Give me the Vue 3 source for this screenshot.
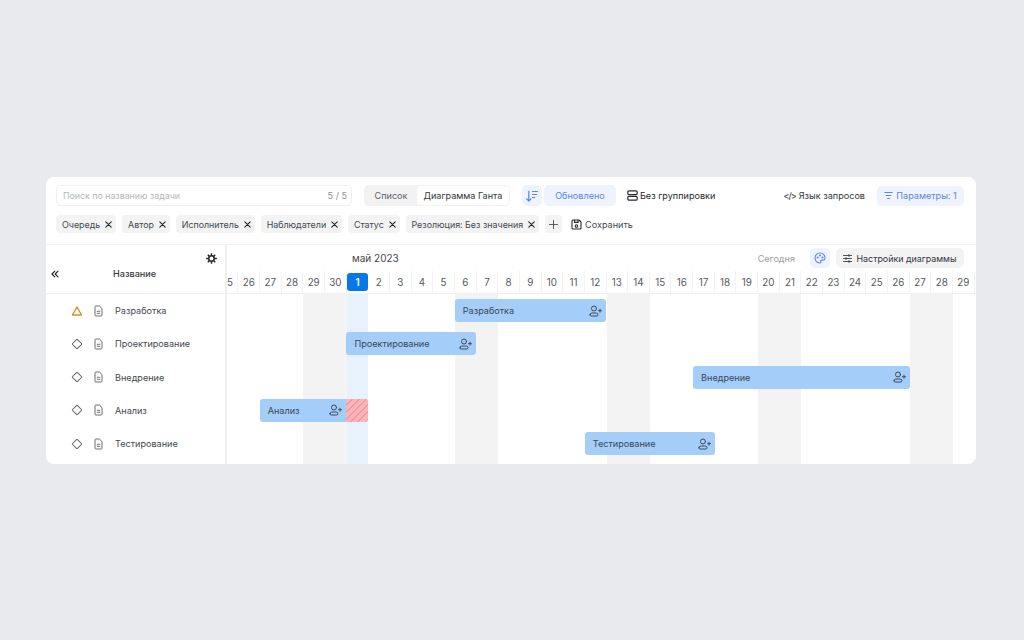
<template>
  <div class="page">
    <div class="card">
      <div class="toolbar">
        <div class="search">
          <span class="search-text">Поиск по названию задачи</span>
          <span class="search-count">5 / 5</span>
        </div>
        <div class="segment">
          <span class="seg-item">Список</span>
          <span class="seg-item active">Диаграмма Ганта</span>
        </div>
        <button class="sort-btn">
          <svg width="12" height="12" viewBox="0 0 12 12" fill="none" stroke="#5b87e8" stroke-width="1.2" stroke-linecap="round" stroke-linejoin="round">
            <path d="M2.800 1v10M.8 9 2.800 11 4.800 9M6.500 1.500h5M6.500 4.500h4M6.500 7.500h2.200" />
          </svg>
        </button>
        <button class="updated-btn">Обновлено</button>
        <div class="grouping">
          <svg width="11" height="11" viewBox="0 0 11 11" fill="none" stroke="#25282e" stroke-width="1.2">
            <rect x=".8" y=".8" width="9.400" height="3.900" rx="1.300" />
            <rect x=".8" y="6.300" width="9.400" height="3.900" rx="1.300" />
          </svg>
          <span>Без группировки</span>
        </div>
        <div class="spacer"></div>
        <div class="query">
          <span class="code-mark">&lt;/&gt;</span>
          <span>Язык запросов</span>
        </div>
        <button class="params-btn">
          <svg width="9" height="9" viewBox="0 0 9 9" fill="none" stroke="#5b87e8" stroke-width="1.100" stroke-linecap="round">
            <path d="M.8 1.500h7.400M2.300 4.500h4.400M3.600 7.500h1.800" />
          </svg>
          <span>Параметры: 1</span>
        </button>
      </div>

      <div class="filters">
        <span v-for="tag in tags" :key="tag" class="tag">
          {{ tag }}
          <svg width="7" height="7" viewBox="0 0 7 7" fill="none" stroke="#25282e" stroke-width="1.100" stroke-linecap="round">
            <path d="M.8.8l5.400 5.400M6.200.8.8 6.200" />
          </svg>
        </span>
        <button class="add-btn">
          <svg width="9" height="9" viewBox="0 0 9 9" fill="none" stroke="#55585e" stroke-width="1" stroke-linecap="round">
            <path d="M4.500.5v8M.5 4.500h8" />
          </svg>
        </button>
        <div class="save">
          <svg width="11" height="11" viewBox="0 0 11 11" fill="none" stroke="#25282e" stroke-width="1.100" stroke-linejoin="round">
            <path d="M1 2a1 1 0 0 1 1-1h6l2 2v6a1 1 0 0 1-1 1H2a1 1 0 0 1-1-1z" />
            <path d="M3.500 1v2.400h3.600V1" />
            <circle cx="5.500" cy="7" r="1.300" />
          </svg>
          <span>Сохранить</span>
        </div>
      </div>

      <div class="gantt">
        <div class="side">
          <div class="side-head">
            <svg class="gear" width="11" height="11" viewBox="0 0 11 11" fill="none" stroke="#1f2227">
              <circle cx="5.500" cy="5.500" r="2.700" stroke-width="1.500" />
              <path stroke-width="1.400" d="M5.500.2v2M5.500 8.800v2M.2 5.500h2M8.800 5.500h2M1.800 1.800l1.400 1.400M7.800 7.800l1.400 1.400M9.200 1.800 7.800 3.200M3.200 7.800 1.800 9.200" />
            </svg>
            <div class="side-title">
              <svg width="8" height="8" viewBox="0 0 8 8" fill="none" stroke="#1f2227" stroke-width="1.100" stroke-linecap="round" stroke-linejoin="round">
                <path d="M3.800 1.200 1 4l2.800 2.800M7 1.200 4.200 4 7 6.800" />
              </svg>
              <span>Название</span>
            </div>
          </div>
          <div class="side-rows">
            <div v-for="(task, i) in tasks" :key="task.name" class="side-row">
              <svg v-if="i === 0" class="prio" width="12" height="12" viewBox="0 0 12 12" fill="none" stroke="#d98f24" stroke-width="1.400" stroke-linejoin="round">
                <path d="M6 2 10.500 10H1.500z" />
              </svg>
              <svg v-else class="prio" width="12" height="12" viewBox="0 0 12 12" fill="none" stroke="#5d6067" stroke-width="1">
                <rect x="2.500" y="2.500" width="7" height="7" rx=".7" transform="rotate(45 6 6)" />
              </svg>
              <svg class="doc" width="9" height="12" viewBox="0 0 9 12" fill="none" stroke="#6b6e74" stroke-width="1" stroke-linejoin="round">
                <path d="M1 2a1 1 0 0 1 1-1h3.400L8 3.600V10a1 1 0 0 1-1 1H2a1 1 0 0 1-1-1z" />
                <path d="M2.800 6.300h3.400M2.800 8.300h3.400" />
              </svg>
              <span class="task-name">{{ task.name }}</span>
            </div>
          </div>
        </div>

        <div class="timeline">
          <div class="timeline-head">
            <div class="month-row">
              <span class="month">май 2023</span>
              <div class="spacer"></div>
              <span class="today-link">Сегодня</span>
              <button class="palette-btn">
                <svg width="12" height="12" viewBox="0 0 12 12" fill="none" stroke="#5b87e8" stroke-width="1.100" stroke-linejoin="round">
                  <path d="M6 1a5 5 0 1 0 0 10c1 0 1.200-.7.9-1.300-.4-.8 0-1.600 1-1.600h1.300C10.300 8.100 11 7.300 11 6c0-2.800-2.200-5-5-5z" />
                  <circle cx="3.600" cy="5.500" r=".5" />
                  <circle cx="6" cy="3.500" r=".5" />
                  <circle cx="8.500" cy="5.500" r=".5" />
                </svg>
              </button>
              <button class="settings-btn">
                <svg width="9" height="9" viewBox="0 0 9 9" fill="none" stroke="#3a3d43" stroke-width=".9" stroke-linecap="round">
                  <path d="M.5 1.500h8M.5 4.500h8M.5 7.500h8" />
                  <path d="M6 .5v2M3 3.500v2M6 6.500v2" />
                </svg>
                <span>Настройки диаграммы</span>
              </button>
            </div>
            <div class="days">
              <span v-for="d in days" :key="d.key" class="day" :class="{ current: d.today }">{{ d.label }}</span>
            </div>
          </div>

          <div class="chart">
            <div class="chart-cols">
              <span v-for="d in days" :key="d.key" class="col" :class="{ weekend: d.weekend, today: d.today }"></span>
            </div>
            <div
              v-for="(task, i) in tasks"
              :key="task.name"
              class="bar"
              :class="{ late: task.overdue }"
              :style="barStyle(task, i)"
            >
              <span class="bar-name">{{ task.name }}</span>
              <svg class="assign" width="13" height="12" viewBox="0 0 13 12" fill="none" stroke="#3b4a5e" stroke-width="1" stroke-linecap="round">
                <circle cx="5" cy="3.500" r="2.500" />
                <path d="M1 9.800a1.800 1.800 0 0 1 1.800-1.800h4.400A1.800 1.800 0 0 1 9 9.800c0 .7-.5 1.200-1.100 1.200H2.100C1.500 11 1 10.500 1 9.800z" />
                <path d="M11 4.200v3M9.500 5.700h3" />
              </svg>
              <span v-if="task.overdue" class="overdue"></span>
            </div>
          </div>
        </div>
      </div>
    </div>
  </div>
</template>

<script setup>
const dayW = 21.67

const tags = ['Очередь', 'Автор', 'Исполнитель', 'Наблюдатели', 'Статус', 'Резолюция: Без значения']

// start/end are offsets in days from the left edge of the chart
const tasks = [
  { name: 'Разработка', start: 10.5, end: 17.5 },
  { name: 'Проектирование', start: 5.5, end: 11.5 },
  { name: 'Внедрение', start: 21.5, end: 31.5 },
  { name: 'Анализ', start: 1.5, end: 6.5, overdue: true },
  { name: 'Тестирование', start: 16.5, end: 22.5 }
]

const days = []
for (let d = 25; d <= 30; d++) {
  days.push({ key: 'a' + d, label: d, weekend: d >= 29 })
}
for (let d = 1; d <= 29; d++) {
  // 6-7 May 2023 is the first weekend
  const mod = d % 7
  days.push({ key: 'm' + d, label: d, today: d === 1, weekend: mod === 6 || mod === 0 })
}

const barStyle = (task, i) => ({
  left: (task.start * dayW + 0.2) + 'px',
  width: (task.end - task.start) * dayW + 'px',
  top: 5 + i * 33.25 + 'px'
})
</script>

<style>
html, body {
  background: #e8eaee;
}
</style>

<style scoped>
.page {
  width: 1024px;
  height: 640px;
  padding-top: 177px;
  padding-left: 46px;
  box-sizing: border-box;
  font-family: Inter, "Noto Sans", sans-serif;
  font-size: 9.1px;
  color: #34373c;
  background: #e8eaee;
}

.card {
  width: 930px;
  height: 287px;
  background: #fff;
  border-radius: 8px;
  overflow: hidden;
}

button {
  border: none;
  padding: 0;
  font: inherit;
  cursor: pointer;
}

.spacer {
  flex: 1;
}

/* Top toolbar */
.toolbar {
  display: flex;
  align-items: center;
  height: 21px;
  padding: 8px 12px 0 10px;
}

.search {
  display: flex;
  align-items: center;
  justify-content: space-between;
  width: 296px;
  height: 21px;
  box-sizing: border-box;
  padding: 0 4px 0 6px;
  border: 1px solid #efeff1;
  border-radius: 5px;
  color: #b4b6ba;
  font-size: 8.800px;
}

.search-count {
  color: #8d9096;
  font-size: 9.100px;
}

.segment {
  display: flex;
  width: 146px;
  height: 21px;
  margin-left: 12px;
  box-sizing: border-box;
  padding: 1px;
  background: #f2f2f3;
  border-radius: 5px;
}

.seg-item {
  display: flex;
  align-items: center;
  justify-content: center;
  width: 52px;
  color: #5d6067;
}

.seg-item.active {
  flex: 1;
  background: #fff;
  border-radius: 4px;
  color: #34373c;
}

.sort-btn {
  display: flex;
  align-items: center;
  justify-content: center;
  width: 20px;
  height: 21px;
  margin-left: 12px;
  background: #eef3fe;
  border-radius: 5px;
}

.updated-btn {
  width: 72px;
  height: 21px;
  margin-left: 2px;
  background: #eef3fe;
  border-radius: 5px;
  color: #5b87e8;
}

.grouping {
  display: flex;
  align-items: center;
  gap: 2px;
  margin-left: 11px;
  color: #25282e;
}

.query {
  display: flex;
  align-items: center;
  gap: 3px;
  color: #34373c;
}

.code-mark {
  font-size: 9px;
  letter-spacing: -1px;
  color: #25282e;
}

.params-btn {
  display: flex;
  align-items: center;
  justify-content: center;
  gap: 3px;
  width: 87px;
  height: 20px;
  margin-left: 12px;
  background: #eef3fe;
  border-radius: 5px;
  color: #5b87e8;
}

/* Filters */
.filters {
  display: flex;
  align-items: center;
  gap: 6px;
  height: 18px;
  padding: 9px 10px 11px;
  border-bottom: 1px solid #f3f3f4;
}

.tag {
  display: flex;
  align-items: center;
  gap: 5px;
  height: 18px;
  padding: 0 3.800px 0 6px;
  background: #f3f3f4;
  border-radius: 4px;
  color: #45484e;
  font-size: 8.900px;
  white-space: nowrap;
}

.add-btn {
  display: flex;
  align-items: center;
  justify-content: center;
  width: 17px;
  height: 18px;
  background: #f3f3f4;
  border-radius: 4px;
}

.save {
  display: flex;
  align-items: center;
  gap: 3px;
  margin-left: 3px;
  color: #45484e;
}

/* Gantt */
.gantt {
  display: flex;
  height: 220px;
}

.side {
  flex: 0 0 179px;
  border-right: 2px solid #efeff0;
}

.side-head {
  position: relative;
  height: 49px;
  box-sizing: border-box;
  border-bottom: 1px solid #f1f1f2;
}

.gear {
  position: absolute;
  top: 8px;
  right: 8px;
}

.side-title {
  display: flex;
  align-items: center;
  padding-top: 23px;
  padding-left: 5px;
  font-weight: 500;
  color: #34373c;
}

.side-title span {
  margin-left: 54px;
}

.side-rows {
  display: flex;
  flex-direction: column;
}

.side-row {
  display: flex;
  align-items: center;
  height: 33.25px;
  padding-left: 25px;
}

.doc {
  margin-left: 11px;
}

.task-name {
  margin-left: 12px;
  color: #45484e;
}

.timeline {
  flex: 1;
  min-width: 0;
  overflow: hidden;
}

.timeline-head {
  height: 49px;
  box-sizing: border-box;
  border-bottom: 1px solid #f1f1f2;
}

.month-row {
  display: flex;
  align-items: center;
  height: 26px;
  padding: 0 12px 0 125px;
}

.month {
  font-size: 10px;
  color: #45484e;
}

.today-link {
  color: #9c9ea3;
}

.palette-btn {
  display: flex;
  align-items: center;
  justify-content: center;
  width: 20px;
  height: 20px;
  margin-left: 15px;
  background: #eef3fe;
  border-radius: 5px;
}

.settings-btn {
  display: flex;
  align-items: center;
  justify-content: center;
  gap: 4px;
  width: 128px;
  height: 20px;
  margin-left: 6px;
  background: #f3f3f4;
  border-radius: 5px;
  color: #34373c;
  font-size: 8.900px;
  white-space: nowrap;
}

.days {
  display: flex;
  height: 22px;
  margin-left: -10.3px;
  align-items: flex-start;
  font-size: 9.800px;
}

.day {
  flex: 0 0 21.67px;
  display: flex;
  align-items: center;
  justify-content: center;
  height: 22px;
  box-sizing: border-box;
  border-right: 1px solid #f3f3f4;
  color: #55585e;
}

.day.current {
  height: 18px;
  margin-top: 2px;
  background: #0a77e8;
  border-radius: 3px;
  border-right: none;
  color: #fff;
  font-weight: 600;
}

.chart {
  position: relative;
  height: 171px;
}

.chart-cols {
  display: flex;
  height: 100%;
  margin-left: -10.3px;
}

.col {
  flex: 0 0 21.67px;
}

.col.weekend {
  background: #f3f3f4;
}

.col.today {
  background: #e8f2fc;
}

.bar {
  position: absolute;
  display: flex;
  align-items: center;
  justify-content: space-between;
  height: 23px;
  box-sizing: border-box;
  padding-left: 8px;
  padding-right: 4px;
  background: #a4cdf9;
  border-radius: 3px;
  color: #3a4654;
}

.bar.late {
  padding-right: 25.67px;
}

.overdue {
  position: absolute;
  top: 0;
  bottom: 0;
  right: 0;
  width: 21.67px;
  border-radius: 0 3px 3px 0;
  background: repeating-linear-gradient(135deg, #fbb4b8 0 4px, #ee9aa4 4px 5px);
}
</style>
